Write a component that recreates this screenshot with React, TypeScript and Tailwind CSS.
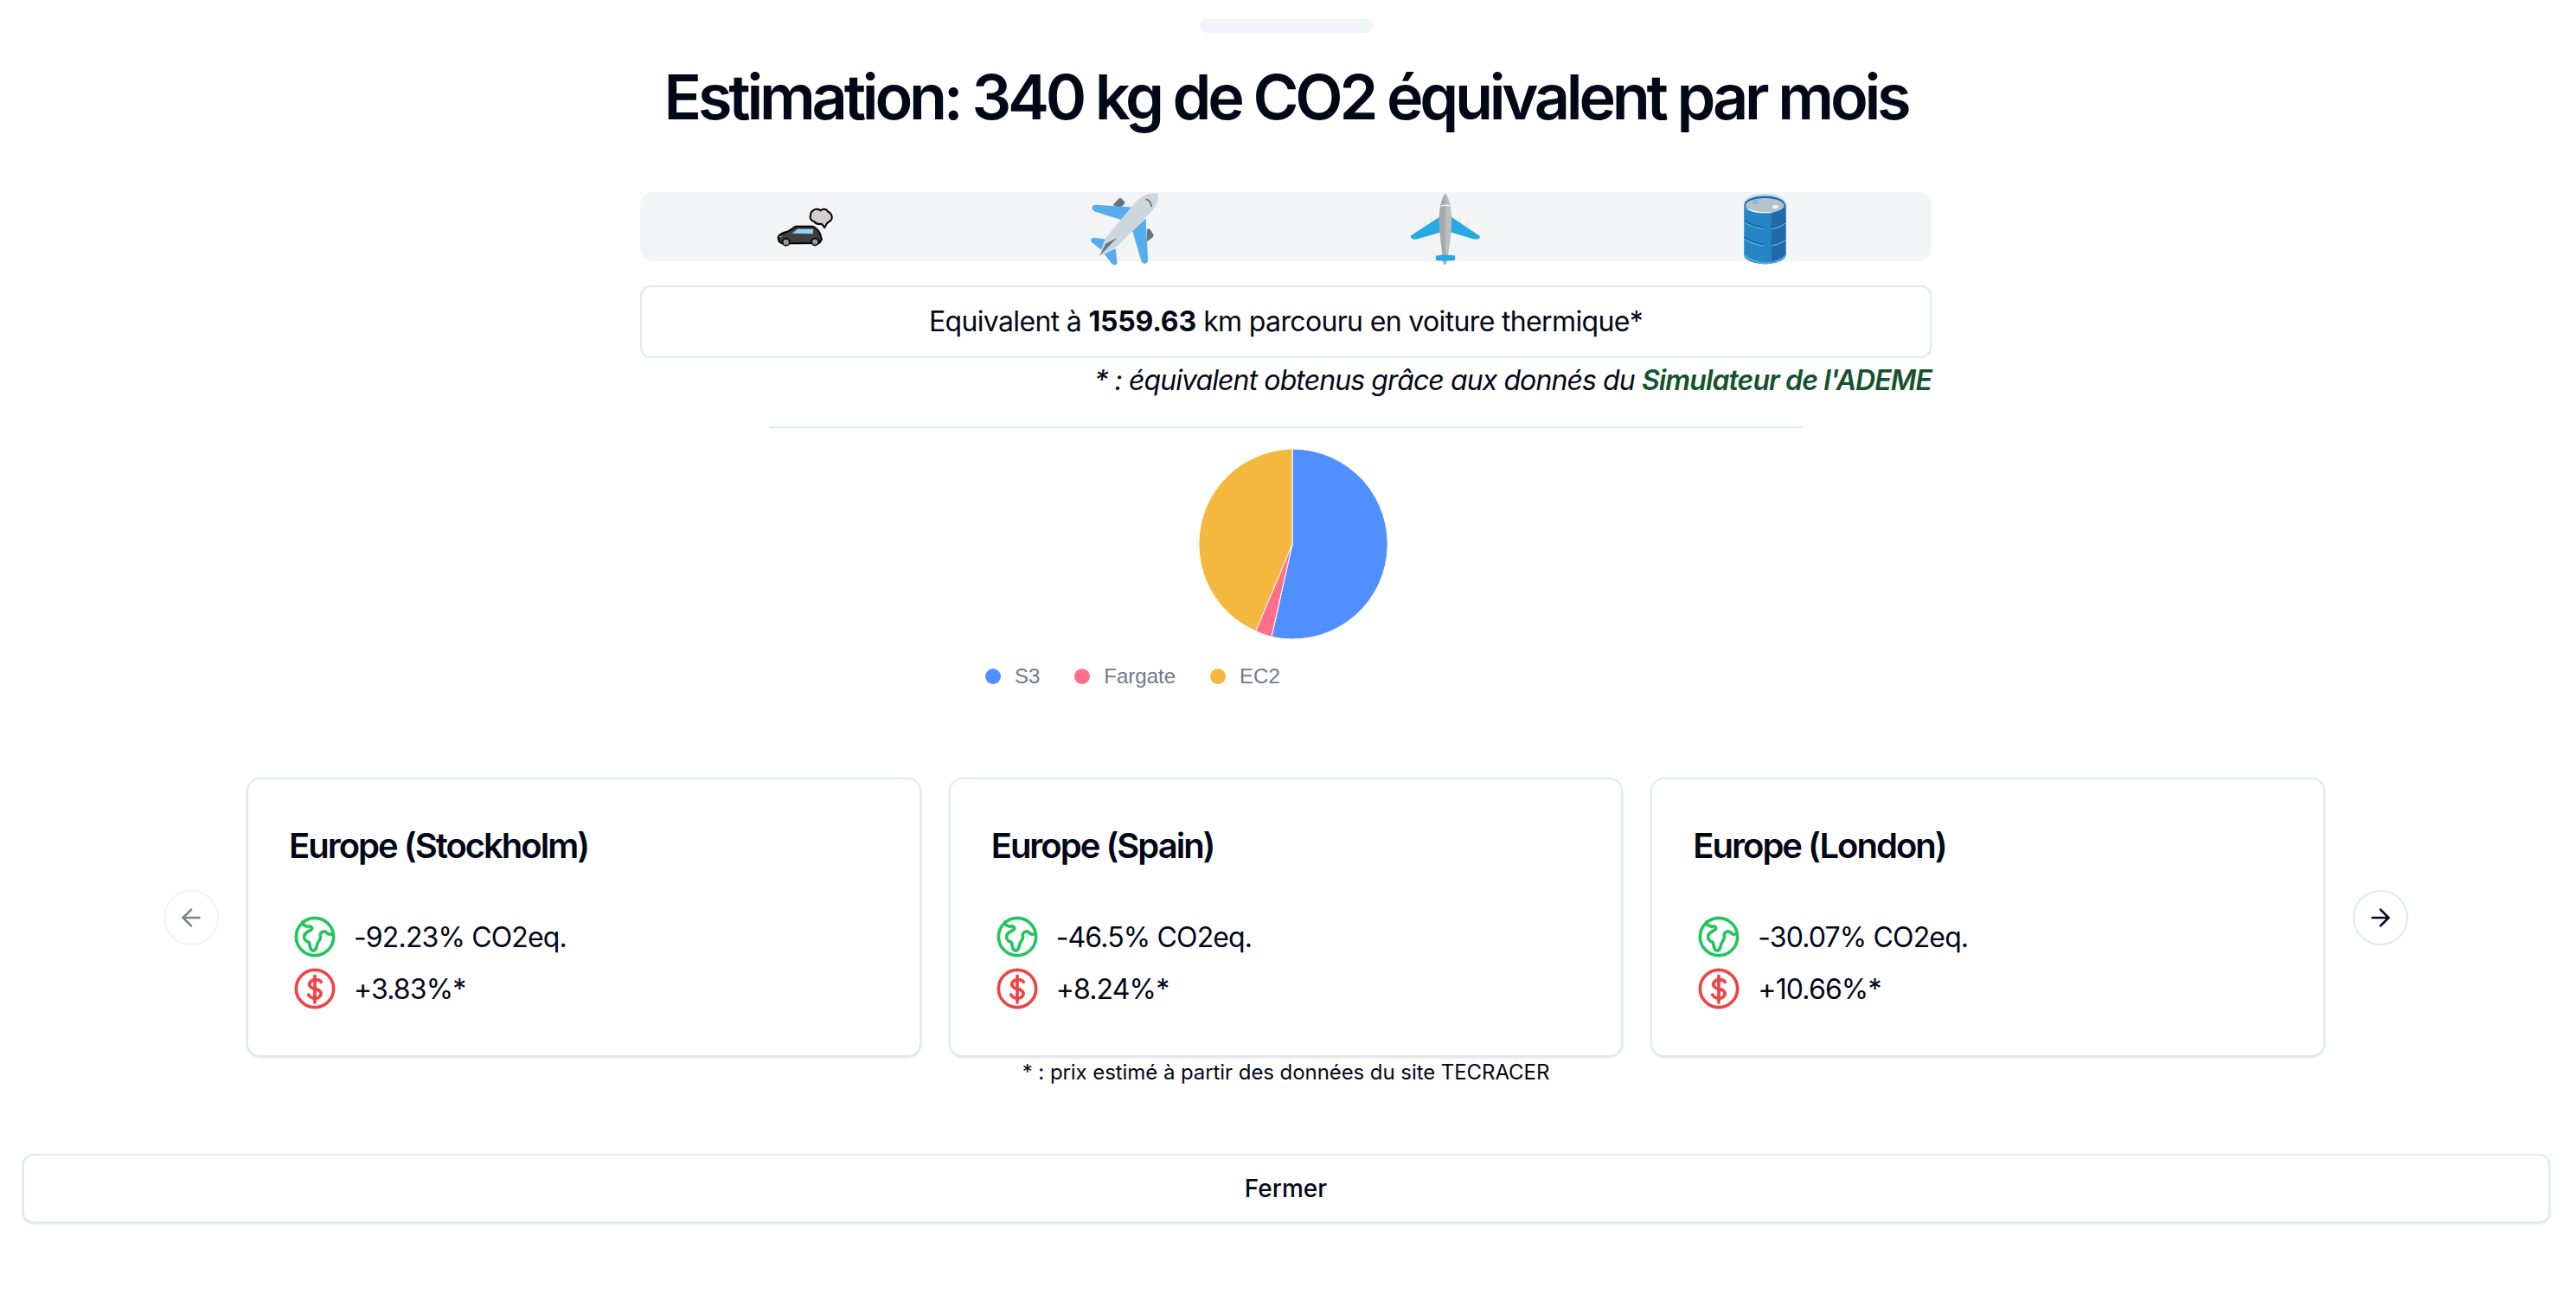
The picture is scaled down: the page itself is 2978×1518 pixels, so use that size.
import { ArrowLeft, ArrowRight } from 'lucide-react';

const regions = [
  { name: 'Europe (Stockholm)', co2: '-92.23% CO2eq.', price: '+3.83%*' },
  { name: 'Europe (Spain)', co2: '-46.5% CO2eq.', price: '+8.24%*' },
  { name: 'Europe (London)', co2: '-30.07% CO2eq.', price: '+10.66%*' },
];

const legend = [
  { label: 'S3', dot: 'bg-[#4f8fff]' },
  { label: 'Fargate', dot: 'bg-[#ff6f87]' },
  { label: 'EC2', dot: 'bg-[#f5b83f]' },
];

function CarIcon() {
  return (
    <svg width="67" height="47" viewBox="50 25 200 140">
      <path d="M178 38c8-8 20-6 27 0 7-8 19-6 25 4 10 4 16 16 12 26-4 8-12 10-16 14l-8 15-10-13c-12 2-22-2-26-8-12-2-16-14-12-24 0-6 4-12 8-14z" fill="#d0cfce" stroke="#000" strokeWidth="6" strokeLinejoin="round" />
      <path d="M58 132c0-12 17-17 34-22l26-17h60c17 7 27 27 30 45l-8 12-125 2c-13-2-17-10-17-20z" fill="#3f3f3f" stroke="#000" strokeWidth="6" strokeLinejoin="round" />
      <path d="M106 117l19-15h53v16z" fill="#92d3f5" />
      <path d="M62 129l9-3" stroke="#fcea2b" strokeWidth="3" />
      <circle cx="85" cy="147" r="12" fill="#9b9b9a" stroke="#000" strokeWidth="5" />
      <circle cx="185" cy="146" r="12" fill="#9b9b9a" stroke="#000" strokeWidth="5" />
    </svg>
  );
}

function JetIcon() {
  return (
    <svg width="82" height="86" viewBox="1120 35 230 240">
      <path d="M1198 76l18-20c4-3 7-3 10 0l9 10c2 4 1 7-3 10l-14 12zM1308 156l8-3 12 18c2 4 2 6-1 9l-19 16z" fill="#66757f" />
      <path d="M1142 76l124 8-36 42-90-28c-14-5-14-22 2-22zM1304 120l7 135c0 14-18 16-22 2l-28-96zM1136 183l42 5-18 34-28-22c-10-8-6-17 4-17zM1206 218l5 46c0 8-11 10-18 2l-24-32z" fill="#55acee" />
      <path d="M1342 40c-30-6-52 8-74 30l-90 108c-14 18-22 62-22 62s40-12 64-38l98-100c20-20 30-44 24-62z" fill="#ccd6dd" />
      <path d="M1210 184l-56 58 20-40z" fill="#66757f" />
      <path d="M1305 58c8 2 15 9 17 22" fill="none" stroke="#66757f" strokeWidth="5" strokeLinecap="round" />
    </svg>
  );
}

function TopPlaneIcon() {
  return (
    <svg width="86" height="86" viewBox="135 35 240 240">
      <path d="M186 130h8v18h-8zM206 116h8v18h-8zM298 116h8v18h-8zM320 130h8v18h-8z" fill="#e9eaeb" />
      <path d="M238 114l-92 60c-6 5-2 14 14 14l80-23zM272 114l92 62c6 5 0 13-14 12l-78-23z" fill="#27aae1" />
      <path d="M255 39c-12 14-20 46-20 90 0 40 10 100 14 139h10c6-40 16-99 16-139 0-44-8-76-20-90z" fill="#bcbec0" />
      <path d="M255 39c-12 14-20 46-20 90 0 40 10 100 14 139h6V39z" fill="#a7a9ac" />
      <path d="M241 80c5-4 24-4 29 0-8-2-21-2-29 0z" fill="#fff" stroke="#fff" strokeWidth="2" />
      <path d="M224 240l32-3 30 3v14c0 4-62 4-62 0z" fill="#27aae1" />
    </svg>
  );
}

function BarrelIcon() {
  return (
    <svg width="52" height="84" viewBox="1215 38 145 235">
      <path d="M1221 72v166c0 18 32 30 67 30s68-12 68-30V72z" fill="#2585c7" />
      <path d="M1310 100v40c-4 4-4 10 0 16v36c-4 4-4 10 0 16v56c26-4 46-14 46-26V72h-46z" fill="#2269a9" />
      <path d="M1222 132c14 10 36 18 60 22M1310 154c18-3 34-10 46-20M1222 186c14 10 36 18 60 22M1310 208c18-3 34-10 46-20M1222 240c14 12 36 22 66 26 28 0 54-10 68-26" fill="none" stroke="#4fb0de" strokeWidth="5" />
      <path d="M1222 128c14 10 36 18 60 22M1310 150c18-3 34-10 46-20M1222 182c14 10 36 18 60 22M1310 204c18-3 34-10 46-20" fill="none" stroke="#1d5f9c" strokeWidth="4" />
      <ellipse cx="1288" cy="72" rx="68" ry="32" fill="#bfe3ea" />
      <ellipse cx="1288" cy="76" rx="66" ry="28" fill="#1e6cb0" />
      <ellipse cx="1288" cy="79" rx="62" ry="24" fill="#b5c3ca" />
      <path d="M1226 86c12 12 34 17 62 17 12 0 22-1 30-3-30 2-74-2-92-14z" fill="#fff" />
      <ellipse cx="1258" cy="67" rx="7" ry="4" fill="#e2ecf2" stroke="#1e6cb0" strokeWidth="2" />
      <ellipse cx="1322" cy="83" rx="10" ry="6" fill="#f0f5f8" />
    </svg>
  );
}

function GlobeIcon() {
  return (
    <svg width="48" height="48" viewBox="18 12 144 144" fill="none" stroke="#22c55e" strokeWidth="11" strokeLinecap="round" strokeLinejoin="round" className="shrink-0">
      <circle cx="90" cy="84" r="65" />
      <path d="M48 32c0 12 10 18 22 16 8-1 13 6 8 11-6 6-22 8-25 22-2 10 6 18 14 21 6 3 5 12 7 20 2 9 12 14 18 6 6-8 4-18 10-26 5-7 10-14 7-22-2-6 3-12 10-14 8-2 12 4 17 8 5 3 10 2 16-1" />
    </svg>
  );
}

function DollarIcon() {
  return (
    <svg width="48" height="48" viewBox="18 12 144 144" fill="none" stroke="#ef4444" strokeWidth="11" strokeLinecap="round" strokeLinejoin="round" className="shrink-0">
      <circle cx="90" cy="84" r="65" />
      <path d="M90 40v92M112 61c-7-9-27-12-37-1-10 12 0 22 15 25 20 3 28 17 15 28-13 9-30 5-37-8" />
    </svg>
  );
}

function PieChart() {
  // slices drawn clockwise from 12 o'clock, radius 110
  return (
    <svg width="220" height="220" viewBox="-110 -110 220 220">
      <path d="M0 0L0 -110A110 110 0 1 1 -24 107.3Z" fill="#4f8fff" stroke="#fff" strokeWidth="1" />
      <path d="M0 0L-24 107.3A110 110 0 0 1 -42.3 100.7Z" fill="#ff6f87" stroke="#fff" strokeWidth="1" />
      <path d="M0 0L-42.3 100.7A110 110 0 0 1 0 -110Z" fill="#f5b83f" stroke="#fff" strokeWidth="1" />
    </svg>
  );
}

export default function App() {
  return (
    <div className="flex flex-col items-center w-[2973px] h-[1518px] bg-white text-[#020817] font-['Inter',sans-serif]">
      <div className="w-[200px] h-4 mt-[22px] rounded-full bg-[#f1f5f9]" />

      <h1 className="mt-6 text-[72px] leading-[100px] font-semibold tracking-[-4.25px]">
        Estimation: 340 kg de CO2 équivalent par mois
      </h1>

      {/* Equivalents */}
      <div className="mt-[60px] w-[1493px]">
        <div className="grid grid-cols-4 grid-rows-[80px] h-20 rounded-2xl bg-[#f3f4f6]">
          <div className="flex items-center justify-center pl-[7px]"><CarIcon /></div>
          <div className="flex items-center justify-center pt-[6px]"><JetIcon /></div>
          <div className="flex items-center justify-center pt-[6px] pr-1"><TopPlaneIcon /></div>
          <div className="flex items-center justify-center pt-[6px] pr-3"><BarrelIcon /></div>
        </div>
        <div className="flex items-center justify-center h-[84px] mt-7 text-[32px] tracking-[-0.65px] bg-white border-2 rounded-xl border-[#e2e8f0]">
          <span>
            Equivalent à <b className="font-bold tracking-[-0.2px]">1559.63</b> km parcouru en voiture thermique*
          </span>
        </div>
        <p className="mt-[2px] text-[32px] leading-[48px] italic text-right tracking-[-0.9px]">
          * : équivalent obtenus grâce aux donnés du{' '}
          <span className="font-semibold text-[#14532d]">Simulateur de l'ADEME</span>
        </p>
      </div>

      <div className="w-[1195px] h-[2px] mt-[29px] bg-[#e2e8f0]" />

      {/* Chart */}
      <div className="mt-6 ml-[14px]">
        <PieChart />
      </div>
      <div className="flex items-center self-start h-6 mt-[31px] ml-[1139px] text-[24px] text-[#6b7a90] font-['Liberation_Sans',sans-serif]">
        {legend.map((item) => (
          <div key={item.label} className="flex items-center gap-[16px] mr-[40px]">
            <span className={`w-[18px] h-[18px] rounded-full ${item.dot}`} />
            {item.label}
          </div>
        ))}
      </div>

      {/* Regions carousel */}
      <div className="flex items-center self-start mt-[105px] ml-[189px] gap-8">
        <button className="flex items-center justify-center w-16 h-16 border-2 rounded-full opacity-50 border-[#e2e8f0]">
          <ArrowLeft size={32} />
        </button>
        <div className="flex gap-8">
          {regions.map((r) => (
            <div key={r.name} className="w-[779.67px] h-[323px] p-12 bg-white border-2 rounded-2xl shadow-sm border-[#e2e8f0]">
              <h3 className="-ml-px text-[40px] leading-[58px] font-semibold tracking-[-2px]">{r.name}</h3>
              <div className="flex items-center gap-[21px] mt-[52px] ml-[5px] text-[32px] tracking-[-0.85px]">
                <GlobeIcon />
                <span className="mt-[2px] leading-[44px]">{r.co2}</span>
              </div>
              <div className="flex items-center gap-[21px] mt-3 ml-[5px] text-[32px] tracking-[-0.85px]">
                <DollarIcon />
                <span className="mt-[2px] leading-[44px]">{r.price}</span>
              </div>
            </div>
          ))}
        </div>
        <button className="flex items-center justify-center w-16 h-16 border-2 rounded-full border-[#e2e8f0]">
          <ArrowRight size={32} />
        </button>
      </div>

      <p className="mt-[2px] text-2xl leading-8 tracking-[-0.07px]">* : prix estimé à partir des données du site TECRACER</p>

      <button className="w-[2922px] h-20 mt-[78px] text-[28px] font-medium bg-white border-2 rounded-xl shadow-sm border-[#e2e8f0]">
        Fermer
      </button>
    </div>
  );
}
